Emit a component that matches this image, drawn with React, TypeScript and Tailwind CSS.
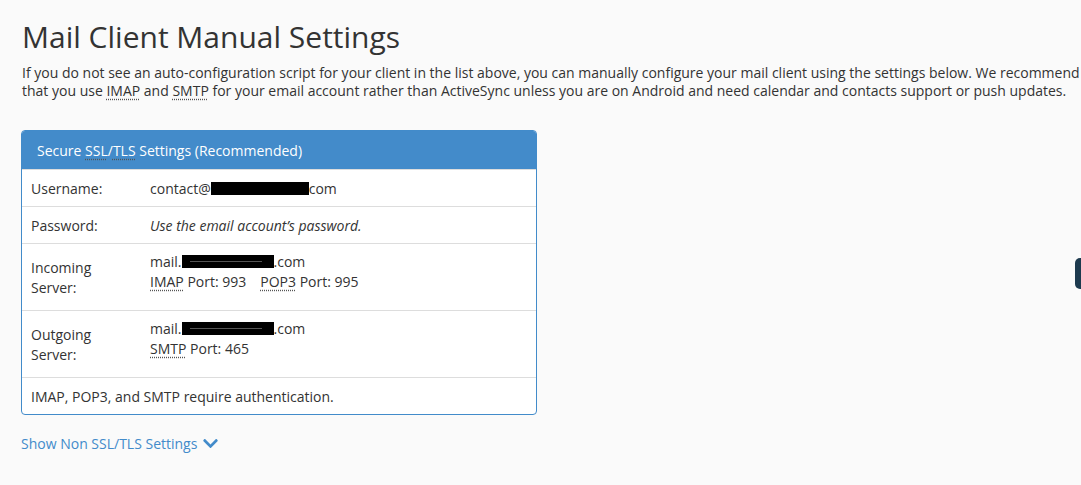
import { FaChevronDown } from "react-icons/fa";

const Abbr = ({ children }: { children: string }) => (
  <span className="underline decoration-dotted decoration-[#555] underline-offset-[3px]">{children}</span>
);

const Redacted = ({ w, lines = false }: { w: string; lines?: boolean }) => (
  <span className={`inline-block h-[13px] align-[-1px] bg-black ${w} relative`}>
    {lines && <span className="absolute left-[8px] right-[12px] top-[6px] h-px bg-[#555]" />}
  </span>
);

const rows = [
  {
    label: "Username:",
    value: (
      <span>
        contact@<Redacted w="w-[98px]" />com
      </span>
    ),
  },
  {
    label: "Password:",
    value: <i>Use the email account’s password.</i>,
  },
];

const App = () => {
  return (
    <div className="min-h-[485px] bg-[#fafafa] text-[#333] font-['Open_Sans',sans-serif] px-[22px] pt-[18px] relative overflow-hidden">
      <h1 className="text-[30px] leading-[38px] font-normal mb-[7px]">Mail Client Manual Settings</h1>
      <p className="text-[14px] leading-[18px] w-[1060px] pt-px">
        If you do not see an auto-configuration script for your client in the list above, you can manually configure your mail client using the settings below. We recommend that you use <Abbr>IMAP</Abbr> and <Abbr>SMTP</Abbr> for your email account rather than ActiveSync unless you are on Android and need calendar and contacts support or push updates.
      </p>

      <div className="mt-[30px] -ml-px w-[516px] border border-[#428bca] rounded-[4px] bg-white text-[14px] overflow-hidden">
        <div className="bg-[#438bca] text-white h-[38px] flex items-center px-[15px]">
          <span>
            Secure <Abbr>SSL</Abbr>/<Abbr>TLS</Abbr> Settings (Recommended)
          </span>
        </div>
        {rows.map((r) => (
          <div key={r.label} className="flex items-center h-[37px] border-t border-[#ddd]">
            <div className="w-[128px] pl-[9px]">{r.label}</div>
            <div>{r.value}</div>
          </div>
        ))}
        <div className="flex h-[67px] border-t border-[#ddd]">
          <div className="w-[128px] pl-[9px] self-center leading-[20px] pt-px">
            Incoming
            <br />
            Server:
          </div>
          <div className="pt-[8px] leading-[20px]">
            <div>
              mail.<Redacted w="w-[92px]" lines />.com
            </div>
            <div>
              <Abbr>IMAP</Abbr> Port: 993<span className="inline-block w-[14px]" />
              <Abbr>POP3</Abbr> Port: 995
            </div>
          </div>
        </div>
        <div className="flex h-[67px] border-t border-[#ddd]">
          <div className="w-[128px] pl-[9px] self-center leading-[20px] pt-px">
            Outgoing
            <br />
            Server:
          </div>
          <div className="pt-[8px] leading-[20px]">
            <div>
              mail.<Redacted w="w-[92px]" lines />.com
            </div>
            <div>
              <Abbr>SMTP</Abbr> Port: 465
            </div>
          </div>
        </div>
        <div className="flex items-center h-[37px] border-t border-[#ddd] pl-[9px]">
          IMAP, POP3, and SMTP require authentication.
        </div>
      </div>

      <button className="mt-[18px] -ml-px flex items-center gap-[5px] text-[14px] text-[#428bca]">
        Show Non SSL/TLS Settings
        <FaChevronDown className="text-[17px]" />
      </button>

      <div className="absolute right-[-6px] top-[258px] w-[12px] h-[31px] rounded-[5px] bg-[#1d3a4e]" />
    </div>
  );
};

export default App;
